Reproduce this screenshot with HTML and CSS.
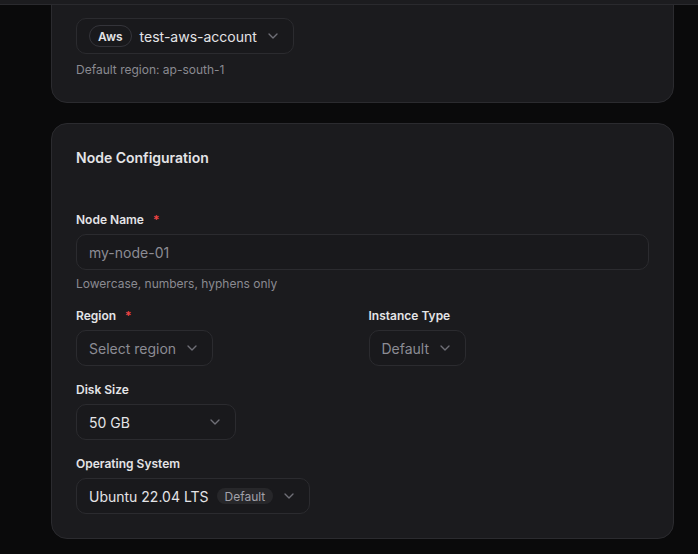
FILE: index.html
```html
<!DOCTYPE html>
<html>
<head>
  <title>New Node</title>
  <link rel="stylesheet" href="styles.css">
</head>
<body>
  <div class="topbar"></div>

  <main class="page">
    <section class="card card-account">
      <button class="select">
        <span class="provider">Aws</span>
        <span class="value">test-aws-account</span>
        <svg class="chevron" viewBox="0 0 24 24"><path d="m6 9 6 6 6-6"/></svg>
      </button>
      <p class="hint">Default region: ap-south-1</p>
    </section>

    <section class="card">
      <h2 class="card-title">Node Configuration</h2>

      <div class="field">
        <div class="label">Node Name <span class="req">*</span></div>
        <input class="input" type="text" placeholder="my-node-01">
        <p class="hint">Lowercase, numbers, hyphens only</p>
      </div>

      <div class="field row">
        <div>
          <div class="label">Region <span class="req">*</span></div>
          <button class="select">
            <span class="placeholder">Select region</span>
            <svg class="chevron" viewBox="0 0 24 24"><path d="m6 9 6 6 6-6"/></svg>
          </button>
        </div>
        <div>
          <div class="label">Instance Type</div>
          <button class="select">
            <span class="placeholder">Default</span>
            <svg class="chevron" viewBox="0 0 24 24"><path d="m6 9 6 6 6-6"/></svg>
          </button>
        </div>
      </div>

      <div class="field">
        <div class="label">Disk Size</div>
        <button class="select select-disk">
          <span class="value">50 GB</span>
          <svg class="chevron" viewBox="0 0 24 24"><path d="m6 9 6 6 6-6"/></svg>
        </button>
      </div>

      <div class="field">
        <div class="label">Operating System</div>
        <button class="select">
          <span class="value">Ubuntu 22.04 LTS</span>
          <span class="tag">Default</span>
          <svg class="chevron" viewBox="0 0 24 24"><path d="m6 9 6 6 6-6"/></svg>
        </button>
      </div>
    </section>
  </main>
</body>
</html>
```

FILE: styles.css
```css
body {
margin: 0;
background-color: #0a0a0b;
color: #e4e4e7;
font-family: Inter, "Noto Sans", sans-serif;
font-size: 14px;
overflow: hidden;
}
.topbar {
position: fixed;
top: 0;
left: 0;
right: 0;
height: 4px;
background-color: #1c1c1f;
border-bottom: 1px solid #2a2a2e;
z-index: 2;
}
/* scrolled down: top of the account card is above the fold */
.page {
display: flex;
flex-direction: column;
gap: 20px;
padding: 0 24px 0 51px;
margin-top: -35px;
}
.card {
background-color: #1b1b1e;
border: 1px solid #2b2b2f;
border-radius: 16px;
padding: 24px;
}
.card-account {
padding-top: 52px;
}
.card-title {
margin: 0 0 44px;
font-size: 14px;
line-height: 20px;
font-weight: 600;
color: #e4e4e7;
}
.label {
font-size: 12px;
line-height: 16px;
font-weight: 600;
color: #e4e4e7;
margin-bottom: 6px;
}
.req {
color: #ef4444;
margin-left: 6px;
}
.field + .field {
margin-top: 16px;
}
.row {
display: grid;
grid-template-columns: 1fr 1fr;
column-gap: 12px;
justify-items: start;
}
.input {
display: block;
box-sizing: border-box;
width: 100%;
height: 36px;
padding: 0 12px;
background-color: #19191c;
border: 1px solid #2b2b2f;
border-radius: 10px;
font-family: inherit;
font-size: 14px;
color: #e4e4e7;
outline: none;
}
.input::placeholder {
color: #8c8c94;
}
.hint {
margin: 6px 0 0;
font-size: 12px;
line-height: 16px;
color: #8a8a91;
}
.card-account .hint {
margin-top: 8px;
}
.select {
display: inline-flex;
align-items: center;
gap: 8px;
box-sizing: border-box;
height: 36px;
padding: 0 12px;
background-color: #19191c;
border: 1px solid #2b2b2f;
border-radius: 10px;
font-family: inherit;
font-size: 14px;
color: #e4e4e7;
cursor: pointer;
}
.select-disk {
width: 160px;
justify-content: space-between;
}
.placeholder {
color: #8c8c94;
}
.provider {
display: inline-flex;
align-items: center;
box-sizing: border-box;
height: 22px;
padding: 0 8px;
border: 1px solid #34343a;
border-radius: 999px;
font-size: 12px;
font-weight: 600;
color: #e4e4e7;
}
.tag {
display: inline-flex;
align-items: center;
height: 16px;
padding: 0 8px;
background-color: #27272a;
border-radius: 999px;
font-size: 12px;
color: #a1a1aa;
}
.chevron {
width: 16px;
height: 16px;
fill: none;
stroke: #6f6f77;
stroke-width: 2;
stroke-linecap: round;
stroke-linejoin: round;
}
```
